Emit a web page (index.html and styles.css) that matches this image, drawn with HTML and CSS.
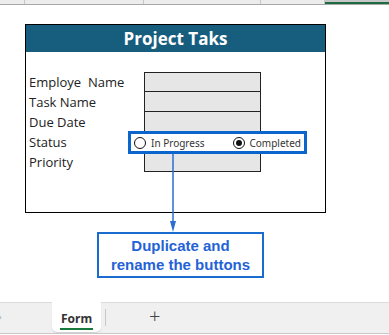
FILE: index.html
```html
<!DOCTYPE html>
<html lang="en">
<head>
    <meta charset="UTF-8">
    <title>Project Taks</title>
    <link rel="stylesheet" href="styles.css">
</head>
<body>
    <div class="col-header">
        <span class="cell w25"></span>
        <span class="cell w119"></span>
        <span class="cell w117"></span>
        <span class="cell w64"></span>
        <span class="cell active"></span>
    </div>

    <div class="sheet">
        <div class="form">
            <div class="form-title">Project Taks</div>
            <div class="form-body">
                <div class="row"><span class="label">Employe&nbsp; Name</span><span class="field"></span></div>
                <div class="row"><span class="label">Task Name</span><span class="field"></span></div>
                <div class="row"><span class="label">Due Date</span><span class="field"></span></div>
                <div class="row"><span class="label">Status</span><span class="field"></span></div>
                <div class="row"><span class="label">Priority</span><span class="field"></span></div>
            </div>
        </div>

        <div class="radio-group">
            <label class="radio"><span class="dot"></span>In Progress</label>
            <label class="radio"><span class="dot checked"></span>Completed</label>
        </div>

        <svg class="arrow" width="12" height="80" viewBox="0 0 12 80">
            <line x1="6" y1="0" x2="6" y2="70" stroke="#2b6fd0" stroke-width="1.5"/>
            <polygon points="3,67 9,67 6,78" fill="#2b6fd0"/>
        </svg>

        <div class="callout">Duplicate and<br>rename the buttons</div>
    </div>

    <div class="tabs">
        <span class="nav-arrow">&rsaquo;</span>
        <span class="tab"><span class="tab-name">Form</span></span>
        <span class="tab-sep"></span>
        <span class="add">+</span>
    </div>
</body>
</html>
```

FILE: styles.css
```css
body {
    margin: 0;
    width: 389px;
    height: 335px;
    overflow: hidden;
    background: #fff;
    font-family: "Open Sans", "Noto Sans", sans-serif;
    position: relative;
}
.col-header {
    display: flex;
    height: 4px;
    background: #ececec;
    border-bottom: 1px solid #a8a8a8;
}
.cell {
    height: 4px;
    border-right: 1px solid #c6c6c6;
}
.w25 { width: 24px; }
.w119 { width: 118px; }
.w117 { width: 116px; }
.w64 { width: 63px; }
.cell.active {
    flex: 1;
    border-right: none;
    background: #c8c8c8;
    border-bottom: 2px solid #1e6b41;
    height: 2px;
}
.sheet {
    position: relative;
    height: 297px;
    box-sizing: border-box;
    padding-top: 19px;
}
.form {
    margin-left: 25px;
    width: 299px;
    height: 187px;
    border: 1px solid #000;
}
.form-title {
    height: 27px;
    background: #175e7e;
    color: #fff;
    font-weight: 700;
    font-size: 17px;
    line-height: 27px;
    text-align: center;
}
.form-body {
    padding: 20px 0 0 3px;
}
.row {
    display: flex;
    height: 20px;
    align-items: center;
}
.label {
    width: 115px;
    font-size: 13px;
    color: #222;
}
.field {
    width: 117px;
    height: 20px;
    box-sizing: border-box;
    background: #e6e6e6;
    border: 1px solid #222;
    border-top: none;
}
.row:first-child .field {
    border-top: 1px solid #222;
}
.radio-group {
    position: absolute;
    left: 128px;
    top: 126px;
    width: 167px;
    height: 17px;
    border: 3px solid #0a66cc;
    background: #fff;
    display: flex;
    align-items: center;
    justify-content: space-between;
    padding: 0 3px;
    font-family: "Noto Sans", sans-serif;
    font-size: 10px;
    color: #333;
}
.radio {
    display: flex;
    align-items: center;
    gap: 5px;
}
.dot {
    width: 12px;
    height: 12px;
    border: 1px solid #111;
    border-radius: 50%;
    box-sizing: border-box;
    position: relative;
}
.dot.checked::after {
    content: "";
    position: absolute;
    left: 2px;
    top: 2px;
    width: 6px;
    height: 6px;
    border-radius: 50%;
    background: #111;
}
.arrow {
    position: absolute;
    left: 167px;
    top: 149px;
}
.callout {
    margin: 19px 0 0 97px;
    width: 163px;
    height: 40px;
    border: 2px solid #1a6bd0;
    text-align: center;
    font-family: "Liberation Sans", Arial, sans-serif;
    font-weight: 700;
    font-size: 15px;
    line-height: 19px;
    color: #2462d6;
    padding-top: 2px;
}
.tabs {
    height: 30px;
    background: #f0f0f0;
    border-top: 1px solid #dcdcdc;
    border-bottom: 1px solid #c8c8c8;
    display: flex;
    align-items: flex-start;
    font-family: "Noto Sans", sans-serif;
}
.nav-arrow {
    width: 55px;
    color: #bbb;
    font-size: 16px;
    line-height: 26px;
    margin-left: -3px;
}
.tab {
    width: 49px;
    height: 30px;
    margin-top: -1px;
    background: #fff;
    border-radius: 0 0 5px 5px;
    box-shadow: 0 1px 1px #d0d0d0;
    box-sizing: border-box;
    padding: 4px 0 0 8px;
}
.tab-name {
    display: inline-block;
    font-size: 12px;
    font-weight: 700;
    color: #333;
    line-height: 18px;
    border-bottom: 2px solid #157a3c;
    padding: 0 1px;
}
.tab-sep {
    width: 1px;
    height: 17px;
    background: #c8c8c8;
    margin: 6px 0 0 4px;
}
.add {
    margin-left: 43px;
    font-size: 20px;
    font-weight: 300;
    color: #444;
    line-height: 26px;
}
```
